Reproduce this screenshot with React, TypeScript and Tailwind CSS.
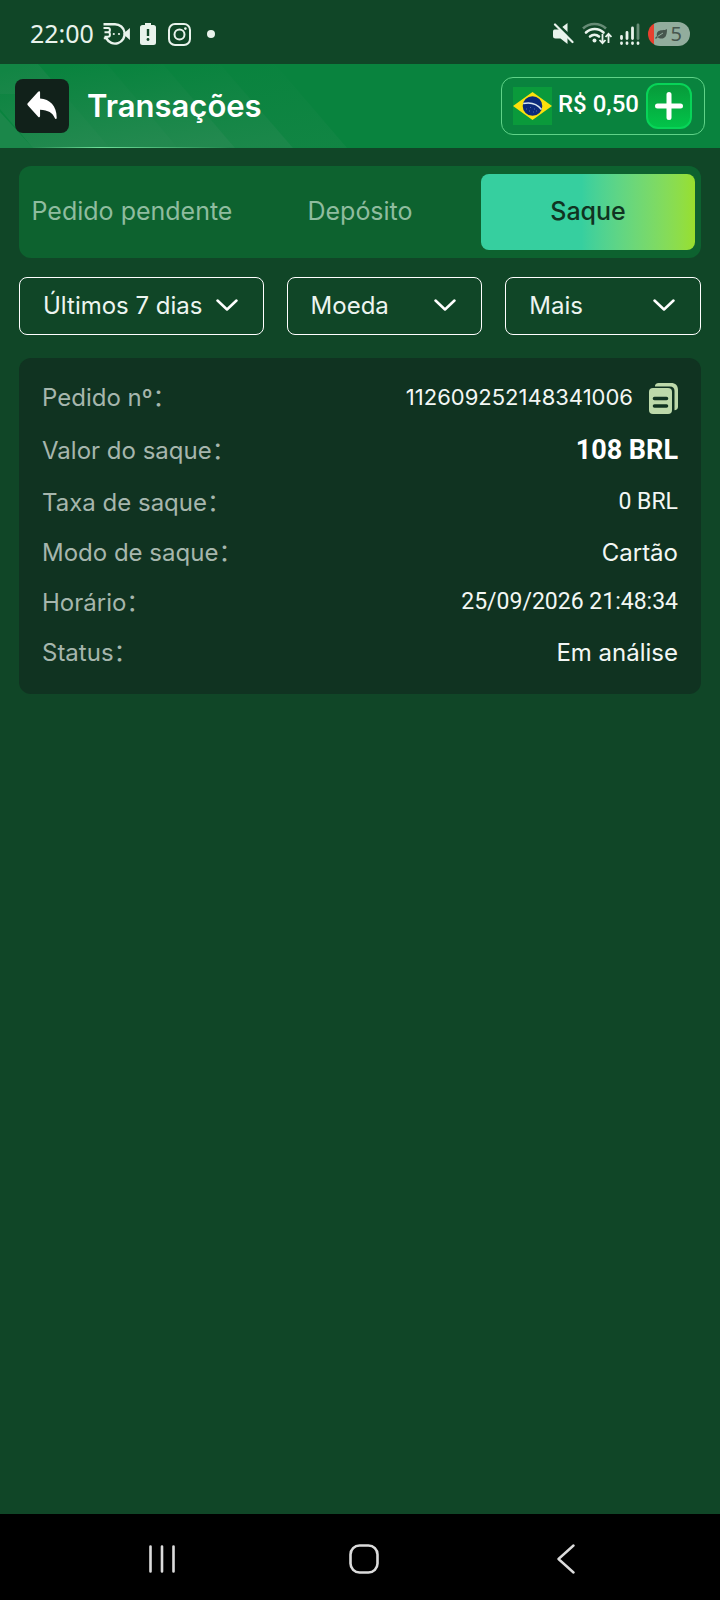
import { useState } from "react";

const tabs = ["Pedido pendente", "Depósito", "Saque"];

const filters = [
  { id: "period", label: "Período", options: ["Últimos 7 dias", "Últimos 30 dias"] },
  { id: "currency", label: "Moeda", options: ["Moeda", "BRL"] },
  { id: "more", label: "Mais filtros", options: ["Mais", "Em análise"] },
];

// numeric values use Roboto, words keep the page font
const details = [
  { label: "Valor do saque", value: "108 BRL", row: "h-[54px]", style: "font-['Roboto',sans-serif] text-[27px] font-bold text-white" },
  { label: "Taxa de saque", value: "0 BRL", row: "h-[50px]", style: "font-['Roboto',sans-serif] text-[23px] pb-[2px]" },
  { label: "Modo de saque", value: "Cartão", row: "h-[50px]", style: "" },
  { label: "Horário", value: "25/09/2026 21:48:34", row: "h-[50px]", style: "font-['Roboto',sans-serif] text-[23px] pb-[2px]" },
  { label: "Status", value: "Em análise", row: "h-[50px]", style: "" },
];

function StatusBar() {
  return (
    <div className="flex h-16 items-center justify-between px-[30px] pt-1 text-[#e9f3ec]">
      <div className="flex items-center">
        <span className="pb-[2px] font-['Noto_Sans',sans-serif] text-[25px] leading-8">22:00</span>
        <svg className="ml-[9px] h-6 w-[27px]" viewBox="0 0 27 24" fill="none" stroke="currentColor">
          <path d="M.5 2.200H12a9.700 9.700 0 1 1-8.600 14.200" strokeWidth="2.400" />
          <path
            d="M.5 6h4.700c2.300 0 2.300 4.200 0 4.200H1.500M5.200 10.200c2.300 0 2.300 4.600 0 4.600H1.500M.8 16.200h3.800"
            strokeWidth="2"
          />
          <path d="M21.500 12l4.500-4v8z" fill="currentColor" strokeWidth="1.800" />
          <circle cx="10.800" cy="12" r="1.100" fill="currentColor" stroke="none" />
          <circle cx="16" cy="12" r="1.100" fill="currentColor" stroke="none" />
        </svg>
        <svg className="ml-[10px] h-[22px] w-4" viewBox="0 0 16 22">
          <path
            fill="currentColor"
            d="M5 0h6v2h2.500A2.500 2.500 0 0 1 16 4.500v15a2.500 2.500 0 0 1-2.500 2.500h-11A2.500 2.500 0 0 1 0 19.500v-15A2.500 2.500 0 0 1 2.500 2H5z"
          />
          <path d="M8 6v7" stroke="#104627" strokeWidth="2.400" />
          <circle cx="8" cy="16.500" r="1.400" fill="#104627" />
        </svg>
        <svg className="ml-3 size-[23px]" viewBox="0 0 23 23" fill="none" stroke="currentColor" strokeWidth="2">
          <rect x="1" y="1" width="21" height="21" rx="6" />
          <circle cx="11.500" cy="11.500" r="5" />
          <circle cx="17.400" cy="5.600" r="1.300" fill="currentColor" stroke="none" />
        </svg>
        <span className="ml-4 size-2 rounded-full bg-current" />
      </div>

      <div className="flex items-center">
        <svg className="h-[22px] w-[22px]" viewBox="0 0 22 22">
          <path fill="currentColor" d="M2.500 6.500H7L15.500 0v21L8.500 15.500H3.500Q1 15.500 1 13V8.500Q1 6.500 2.500 6.500z" />
          <path d="M4 0l18 17" stroke="#104627" strokeWidth="3" />
          <path d="M3 1.500l17.500 17.500" stroke="currentColor" strokeWidth="2.200" strokeLinecap="round" />
        </svg>
        <svg className="ml-2 h-6 w-[30px]" viewBox="0 0 30 24" fill="none" stroke="currentColor" strokeWidth="2.600">
          <path d="M1 6.500a17 17 0 0 1 23 0" opacity="0.400" />
          <path d="M4 10.500a12.500 12.500 0 0 1 17.500 0M8 14.500a7 7 0 0 1 9 0" strokeLinecap="round" />
          <circle cx="12.500" cy="18.500" r="2" fill="currentColor" stroke="none" />
          <path d="M20.500 12v9M17.500 18l3 3.200 3-3.200M26.500 21v-9M23.500 15l3-3.200 3 3.200" strokeWidth="1.800" />
        </svg>
        <svg
          className="ml-2 h-[22px] w-5"
          viewBox="0 0 20 22"
          fill="none"
          stroke="currentColor"
          strokeWidth="2.800"
          strokeLinecap="round"
        >
          <path d="M1.500 20v.6M7 20v.6M12.500 20v.6M18 20v.6" />
          <path d="M1.500 13.500v2M7 9.500v6M12.500 5v10.500" />
          <path d="M18 2v13.500" opacity="0.400" />
        </svg>
        <span className="ml-2 flex h-6 w-[42px] items-center justify-end gap-1 rounded-full bg-linear-to-r from-[#e8402f] from-15% to-[#92ad9d] to-15% pr-2 text-[#46564d]">
          <svg className="h-[11px] w-3" viewBox="0 0 12 11">
            <path
              fill="currentColor"
              d="M12 0c0 7-2 9.500-5.500 9.500-1.500 0-3-.4-4-1.200L1 10 0 9l2-2C1 3 3.500 1.300 7 1.200 9 1.100 11 1 12 0z"
            />
            <path d="M2.500 7.500L8 4" stroke="#92ad9d" />
          </svg>
          <span className="font-['Noto_Sans',sans-serif] text-xl leading-6">5</span>
        </span>
      </div>
    </div>
  );
}

function HeaderBands() {
  return (
    <svg
      className="pointer-events-none absolute bottom-0 left-0 h-[84px] w-[360px]"
      viewBox="0 0 360 84"
      aria-hidden="true"
    >
      <defs>
        <linearGradient id="band" x1="0.250" y1="0" x2="0.600" y2="1">
          <stop offset="0" stopColor="#a8a8a8" stopOpacity="0" />
          <stop offset="1" stopColor="#a8a8a8" stopOpacity="0.160" />
        </linearGradient>
        <linearGradient id="line" x1="0" y1="0" x2="1" y2="0">
          <stop offset="0" stopColor="#6fe09a" stopOpacity="0" />
          <stop offset="0.350" stopColor="#6fe09a" />
          <stop offset="1" stopColor="#6fe09a" stopOpacity="0" />
        </linearGradient>
      </defs>
      <path d="M0 0v48l33 36H0z" fill="#a8a8a8" opacity="0.120" />
      <path d="M0 0H38L110 84H33L0 45z" fill="url(#band)" />
      <path d="M0 0H38L64 30H0z" fill="#a8a8a8" opacity="0.060" />
      <path d="M38 0H107L178 84H110z" fill="url(#band)" />
      <path d="M107 0H163L235 84H178z" fill="url(#band)" />
      <path d="M163 0H220L293 84H235z" fill="url(#band)" opacity="0.700" />
      <path d="M220 0H275L347 84H293z" fill="url(#band)" opacity="0.300" />
      <rect x="30" y="83" width="200" height="1" fill="url(#line)" />
    </svg>
  );
}

function BrazilFlag() {
  return (
    <svg className="h-[38px] w-[39px]" viewBox="0 0 39 38" role="img" aria-label="Brasil">
      <rect width="39" height="38" fill="#0a9a3b" />
      <path d="M19.500 5L39 19 19.500 33 0 19z" fill="#fbe00c" />
      <circle cx="19.500" cy="19" r="9.800" fill="#0b2a7b" />
      <path d="M10.200 16.500c7-1.500 14 .5 18.300 6" fill="none" stroke="#d8e6ee" strokeWidth="1.600" />
      <path d="M13 22h1M16 24h1M20 25h1M23 24h1M17 20.500h1M21 22h1" stroke="#4f68a8" />
    </svg>
  );
}

function Header() {
  return (
    <header className="relative flex h-[84px] items-center justify-between bg-[#09833e] px-[15px]">
      <HeaderBands />
      <div className="relative flex items-center gap-[18px]">
        <button
          type="button"
          aria-label="Voltar"
          className="flex size-[54px] items-center justify-center rounded-lg bg-[#11211a]"
        >
          <svg className="h-[30px] w-8 pb-px" viewBox="0 0 32 30" fill="#fff">
            <path d="M14 1.500v6.300c10 .3 17.200 8 17.200 19.500 0 2.200-1.400 2.300-2 .7-2.200-5.600-6.700-8.300-15.200-8.700v6.300c0 1.600-1 2-2 1L1.500 15c-.9-.8-.9-1.700 0-2.500L12 .7c1-1 2-.6 2 .8z" />
          </svg>
        </button>
        <h1 className="text-[31px] leading-10 font-semibold text-white">Transações</h1>
      </div>

      <div className="relative flex h-[58px] items-center rounded-xl border border-[#5fd388] pr-3 pl-[11px]">
        <BrazilFlag />
        <span className="mr-[7px] ml-[6px] pb-1 font-['Roboto',sans-serif] text-2xl font-medium text-white">
          R$ 0,50
        </span>
        <button
          type="button"
          aria-label="Depositar"
          className="flex size-[46px] items-center justify-center rounded-xl border-2 border-[#08d458] bg-linear-to-b from-[#079a3a] to-[#02c449]"
        >
          <svg className="size-7" viewBox="0 0 28 28" stroke="#fff" strokeWidth="5" strokeLinecap="round">
            <path d="M14 2.500v23M2.500 14h23" />
          </svg>
        </button>
      </div>
    </header>
  );
}

export default function App() {
  const [activeTab, setActiveTab] = useState("Saque");

  return (
    <div className="flex min-h-screen flex-col bg-[#104627] font-[Inter,'Noto_Sans_CJK_SC',sans-serif] text-2xl">
      <StatusBar />
      <Header />

      <main className="flex-1 px-[19px] pt-[18px]">
        <div role="tablist" className="grid grid-cols-3 gap-[14px] rounded-xl bg-[#0d622f] px-[6px] py-2">
          {tabs.map((tab) => (
            <button
              key={tab}
              type="button"
              role="tab"
              aria-selected={activeTab === tab}
              onClick={() => setActiveTab(tab)}
              className={`h-[76px] rounded-lg text-[25px] whitespace-nowrap ${
                activeTab === tab
                  ? "bg-linear-to-r from-[#36cf9f] from-47% to-[#98df2c] font-medium text-[#103321]"
                  : "text-[#8fbc9f]"
              }`}
            >
              {tab}
            </button>
          ))}
        </div>

        <div className="mt-[19px] grid grid-cols-[5fr_4fr_4fr] gap-[23px]">
          {filters.map((filter) => (
            <div key={filter.id} className="relative">
              <select
                id={filter.id}
                aria-label={filter.label}
                className="h-[58px] w-full appearance-none rounded-lg border border-white bg-transparent pl-[23px] text-[#edf5f0]"
              >
                {filter.options.map((option) => (
                  <option key={option} className="bg-[#104627]">
                    {option}
                  </option>
                ))}
              </select>
              <svg
                className="pointer-events-none absolute top-[22px] right-[26px] h-3 w-[22px]"
                viewBox="0 0 22 12"
                fill="none"
                stroke="#fff"
                strokeWidth="2.500"
                strokeLinecap="round"
                strokeLinejoin="round"
              >
                <path d="M1.500 1.500L11 10.500l9.500-9" />
              </svg>
            </div>
          ))}
        </div>

        <dl className="mt-[23px] rounded-xl bg-[#103321] px-[23px] pt-[14px] pb-4 text-[#f3f7f4]">
          <div className="flex h-[52px] items-center justify-between">
            <dt className="text-[#a6b6ad]">Pedido nº：</dt>
            <dd className="flex items-center gap-4 text-[22px]">
              112609252148341006
              <button type="button" aria-label="Copiar número do pedido">
                <svg className="h-[31px] w-[29px]" viewBox="0 0 29 31">
                  <path
                    fill="#bdd9aa"
                    d="M6 2.500C6.500 1 7.500 0 9.500 0H22c4.500 0 7 2.500 7 7v17c0 2-1.500 3-3.500 3.200V8c0-3-1.500-4.500-4.500-4.500H6z"
                  />
                  <rect y="5" width="23" height="26" rx="4" fill="#bdd9aa" />
                  <path d="M5.500 15.500h12M5.500 23h12" stroke="#103321" strokeWidth="3.600" strokeLinecap="round" />
                </svg>
              </button>
            </dd>
          </div>
          {details.map((item) => (
            <div key={item.label} className={`flex items-center justify-between ${item.row}`}>
              <dt className="text-[#a6b6ad]">{item.label}：</dt>
              <dd className={item.style}>{item.value}</dd>
            </div>
          ))}
        </dl>
      </main>

      <nav className="grid h-[86px] grid-cols-3 place-items-center bg-black pt-1 pr-[53px] pl-[61px]">
        <button type="button" aria-label="Recentes">
          <svg className="h-7 w-[26px]" viewBox="0 0 26 28" stroke="#dcdcdc" strokeWidth="2.600" strokeLinecap="round">
            <path d="M1.500 1.500v25M13 1.500v25M24.500 1.500v25" />
          </svg>
        </button>
        <button type="button" aria-label="Início">
          <svg className="size-[30px]" viewBox="0 0 30 30" fill="none" stroke="#dcdcdc" strokeWidth="2.600">
            <rect x="1.500" y="1.500" width="27" height="27" rx="9" />
          </svg>
        </button>
        <button type="button" aria-label="Voltar">
          <svg
            className="h-[30px] w-[18px]"
            viewBox="0 0 18 30"
            fill="none"
            stroke="#dcdcdc"
            strokeWidth="2.400"
            strokeLinecap="round"
            strokeLinejoin="round"
          >
            <path d="M16.500 1.500L1.500 15l15 13.500" />
          </svg>
        </button>
      </nav>
    </div>
  );
}
